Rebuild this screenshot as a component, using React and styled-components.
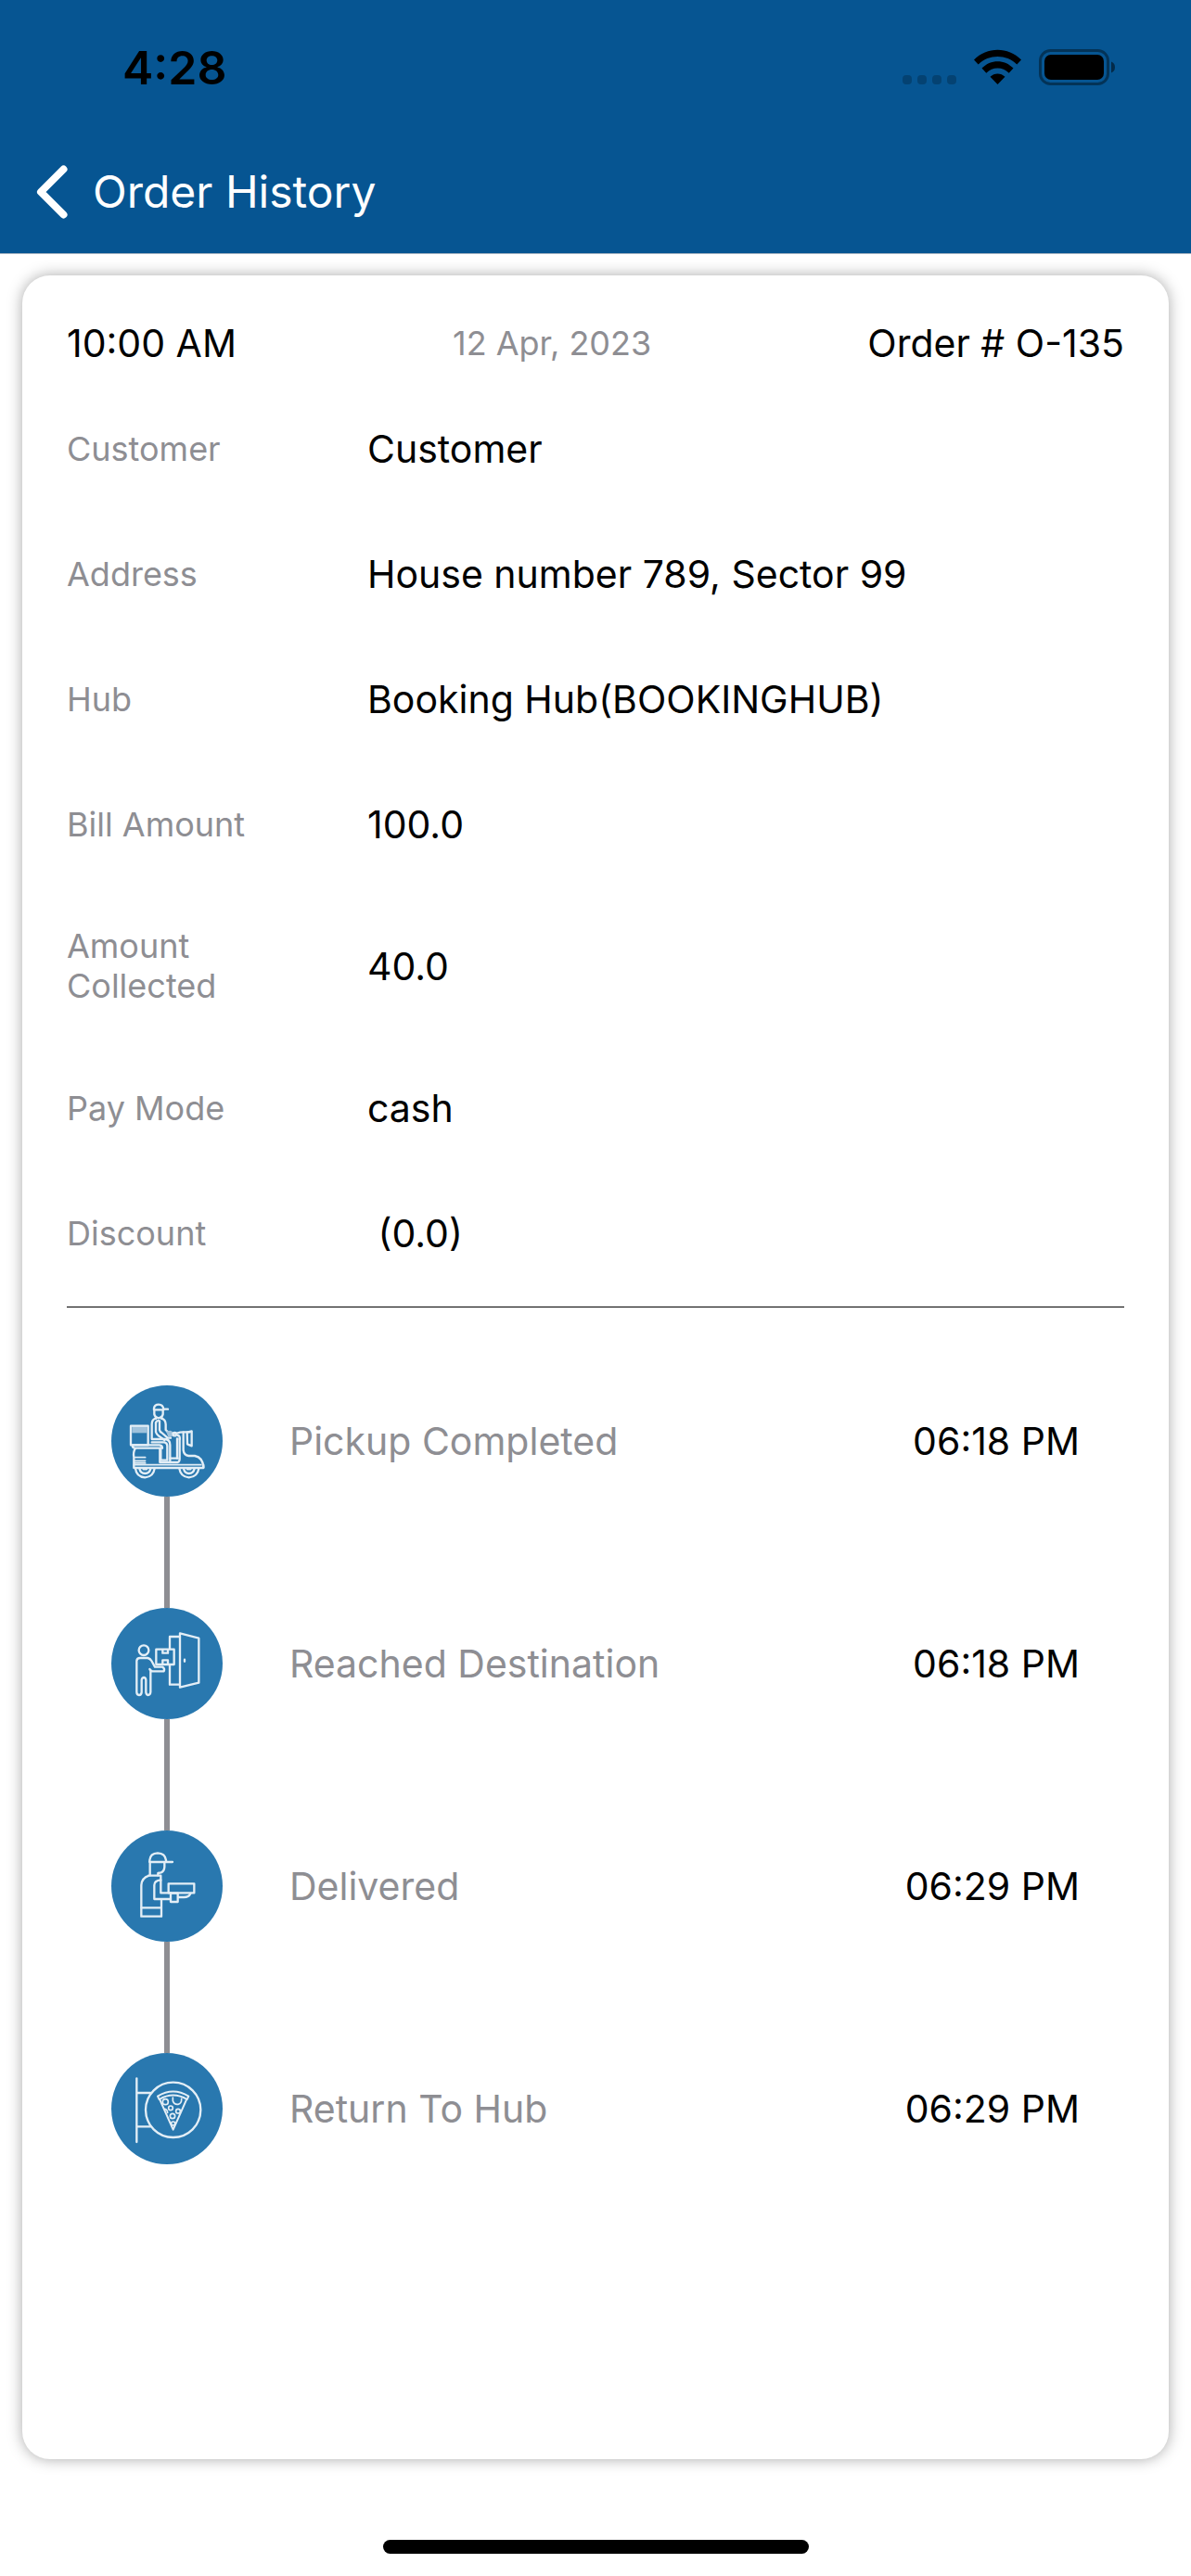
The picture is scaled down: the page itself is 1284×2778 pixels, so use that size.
import React from "react";
import styled, { createGlobalStyle } from "styled-components";

const colors = {
  brand: "#065592",
  badge: "#2978af",
  muted: "#8e8e93",
  ink: "#000000",
};

const GlobalStyle = createGlobalStyle`
  *, *::before, *::after { box-sizing: border-box; }
  body {
    margin: 0;
    background: #ffffff;
    color: ${colors.ink};
    font-family: Inter, "Liberation Sans", sans-serif;
  }
`;

const Screen = styled.div`
  display: flex;
  flex-direction: column;
  min-height: 100vh;
`;

const Header = styled.header`
  background: ${colors.brand};
  border-bottom: 1px solid #a5b4c2;
`;

const StatusBar = styled.div`
  display: flex;
  align-items: center;
  justify-content: space-between;
  height: 141px;
  padding: 4px 81px 0 132px;
`;

const Clock = styled.time`
  font-size: 50px;
  line-height: 60px;
  font-weight: 600;
`;

const StatusIcons = styled.div`
  display: flex;
  align-items: center;
  gap: 19px;

  svg {
    display: block;
  }
`;

const NavBar = styled.nav`
  display: flex;
  align-items: center;
  gap: 20px;
  height: 132px;
  padding: 0 32px;
`;

const BackButton = styled.button`
  display: flex;
  justify-content: center;
  width: 48px;
  padding: 0;
  border: 0;
  background: none;
  color: #ffffff;
  cursor: pointer;
`;

const Title = styled.h1`
  margin: 0;
  color: #ffffff;
  font-size: 48px;
  line-height: 60px;
  font-weight: 400;
`;

const Card = styled.main`
  flex: 1;
  margin: 23px 24px 24px;
  padding: 48px;
  border-radius: 30px;
  background: #ffffff;
  box-shadow: 0 0 16px rgba(0, 0, 0, 0.34);
`;

const Text = styled.span`
  color: ${(p) => (p.$muted ? colors.muted : colors.ink)};
  font-size: ${(p) => (p.$small ? 36 : 41)}px;
  line-height: ${(p) => (p.$small ? 43 : 50)}px;
  white-space: pre-wrap;
`;

const Summary = styled.div`
  display: flex;
  align-items: center;
  justify-content: space-between;
`;

const Details = styled.dl`
  display: flex;
  flex-direction: column;
  gap: 85px;
  margin: 0;
  padding: 64px 0 54px;
  border-bottom: 1px solid ${colors.ink};
`;

const DetailRow = styled.div`
  display: grid;
  grid-template-columns: 260px 1fr;
  column-gap: 64px;
  align-items: center;

  dd {
    margin: 0;
  }
`;

const Timeline = styled.ol`
  display: flex;
  flex-direction: column;
  gap: 120px;
  margin: 0;
  padding: 84px 48px 0;
  list-style: none;
`;

const Step = styled.li`
  display: grid;
  grid-template-columns: 120px 1fr auto;
  column-gap: 72px;
  align-items: center;
`;

const Badge = styled.span`
  position: relative;
  display: block;
  width: 120px;
  height: 120px;
  border-radius: 50%;
  background: ${colors.badge};

  svg {
    display: block;
  }

  ${Step}:not(:last-child) &::after {
    content: "";
    position: absolute;
    top: 100%;
    left: 57px;
    width: 6px;
    height: 120px;
    background: ${colors.muted};
  }
`;

const Footer = styled.footer`
  display: flex;
  justify-content: center;
  padding: 63px 0 24px;
`;

const HomeIndicator = styled.div`
  width: 459px;
  height: 15px;
  border-radius: 8px;
  background: ${colors.ink};
`;

function SignalDots() {
  return (
    <svg width="58" height="39" viewBox="0 0 58 39" fill="#000" fillOpacity="0.22" aria-hidden="true">
      {[0, 16, 32, 48].map((x) => (
        <rect key={x} x={x} y="28" width="10" height="10" rx="4" />
      ))}
    </svg>
  );
}

function WifiIcon() {
  return (
    <svg width="51" height="39" viewBox="0 0 51 39" aria-hidden="true">
      <path d="M0 11.5C14-2.8 37-2.8 51 11.5L46.300 16.500C35 5.200 16 5.200 4.700 16.500Z" />
      <path d="M8.500 20.500C18 10.700 33 10.700 42.500 20.500L37.700 25.700C31 18.700 20 18.700 13.300 25.700Z" />
      <path d="M17.500 29.800C22 25.300 29 25.300 33.500 29.800L25.500 38Z" />
    </svg>
  );
}

function BatteryIcon() {
  return (
    <svg width="83" height="39" viewBox="0 0 83 39" aria-hidden="true">
      <rect x="1.500" y="1.500" width="73" height="36" rx="11" fill="none" stroke="#000" strokeOpacity="0.4" strokeWidth="3" />
      <rect x="6" y="6" width="64" height="27" rx="7" />
      <path d="M78 13.500Q82 15 82 19.500T78 25.500Z" fillOpacity="0.5" />
    </svg>
  );
}

function ChevronLeft() {
  return (
    <svg width="34" height="58" viewBox="0 0 34 58" fill="none" stroke="currentColor" strokeWidth="8" strokeLinecap="round" strokeLinejoin="round" aria-hidden="true">
      <path d="M29.500 4.500L5 29L29.500 53.500" />
    </svg>
  );
}

function StepArt({ children }) {
  return (
    <svg width="120" height="120" viewBox="30 42 360 360" fill="none" stroke="#e3eef6" strokeWidth="7" strokeLinejoin="round" strokeLinecap="round" aria-hidden="true">
      {children}
    </svg>
  );
}

function ScooterArt() {
  return (
    <StepArt>
      {/* rider's cap and head */}
      <path d="M168 121V116Q170 104 183 104Q197 104 199 119H213" />
      <path d="M168 121H199M169 121V136Q171 146 183 148Q195 146 197 136V121" />
      <path d="M174 145V150M193 145V150" />
      {/* torso and arm */}
      <path d="M174 149Q161 152 161 168V216H204Q220 217 220 235V278H245" />
      <path d="M193 149Q205 152 206 168V186L213 193" />
      <path d="M174 163Q177 154 186 157V186Q187 192 193 195L212 212H222" />
      <path d="M174 163V193Q176 201 184 206L202 219" />
      <path d="M207 191L220 188Q230 190 230 200Q229 210 215 211Z" fill="#9fc2dc" stroke="none" />
      {/* delivery box */}
      <rect x="97" y="174" width="48" height="22" fill="#9fc2dc" stroke="none" />
      <path d="M93 173H149V235H93Z" />
      {/* seat and leg */}
      <path d="M98 235H186Q195 236 195 245H105Q98 244 98 235Z" />
      <path d="M161 226H202Q211 228 211 238V284H190V246" />
      <path d="M187 246V291H245Q251 289 251 280V214" />
      <path d="M220 278V291M243 278V214" />
      {/* handlebars and headlamp */}
      <path d="M230 197H243Q252 193 263 193H284" />
      <circle cx="235" cy="200" r="5" />
      <path d="M275 194L290 190V238L276 232Z" />
      <path d="M263 194V252Q265 268 280 270H300Q326 275 328 307" />
      <path d="M251 216Q253 205 245 204" />
      {/* chassis */}
      <path d="M107 247Q100 258 103 275V309H328V299" />
      <path d="M103 299H320M105 275H140M105 286H140M105 293H140" strokeWidth="5" />
      {/* wheels */}
      <path d="M108 311Q111 338 139 340Q166 338 170 311M121 311Q124 326 139 327Q154 326 157 311" />
      <path d="M250 311Q254 338 281 340Q309 338 313 311M264 311Q267 326 281 327Q296 326 299 311" />
      <path d="M134 313H144M276 313H286" />
    </StepArt>
  );
}

function DoorArt() {
  return (
    <StepArt>
      <circle cx="135" cy="179" r="16" />
      {/* courier */}
      <path d="M112 213Q113 204 123 204H148Q156 206 160 213L171 233H196Q204 238 200 247H163Q158 246 154 240L157 246V314Q156 324 149 324Q143 323 142 315V275Q141 267 135 267Q129 268 128 275V315Q127 324 120 324Q112 323 112 314Z" />
      {/* parcel */}
      <path d="M175 176H233V225H175ZM196 177V188H213V177M196 224V211H213V224" />
      {/* doorway and open door */}
      <path d="M219 174V135H250M219 226V290H250" />
      <path d="M252 124L313 140V284L252 299Z" />
      <path d="M267 209V215" />
    </StepArt>
  );
}

function CourierArt() {
  return (
    <StepArt>
      {/* cap and face */}
      <path d="M154 144V138Q156 116 180 115Q204 116 207 138V143" />
      <path d="M154 144H228M155 144V187M202 146V160Q201 174 191 178L181 180V187" />
      {/* torso */}
      <path d="M150 188H190V203M152 188Q128 196 127 219V320H192V268" />
      <path d="M128 292H191" />
      {/* arm */}
      <path d="M190 202Q169 204 169 219V264H222M190 204V244H222" />
      {/* tray and hand */}
      <path d="M215 214H298V244H215Z" />
      <path d="M222 245H245V273H222ZM246 258H265Q281 258 286 246" />
    </StepArt>
  );
}

function PizzaSignArt() {
  return (
    <StepArt>
      <path d="M112 124V330M115 171H157M115 280H157" />
      <circle cx="230" cy="226" r="89" />
      {/* slice */}
      <path d="M180 182Q230 151 280 182L275 192Q230 165 185 192Z" strokeWidth="6" />
      <path d="M187 193L230 290L273 193" strokeWidth="6" />
      <g strokeWidth="5">
        <path d="M229 186V197Q234 210 246 208Q258 205 257 190" />
        <circle cx="205" cy="200" r="9" />
        <circle cx="222" cy="220" r="7" />
        <circle cx="246" cy="230" r="7" />
        <circle cx="228" cy="246" r="8" />
        <circle cx="230" cy="270" r="6" />
        <path d="M201 223Q211 223 212 235" />
      </g>
    </StepArt>
  );
}

const details = [
  ["Customer", "Customer"],
  ["Address", "House number 789, Sector 99"],
  ["Hub", "Booking Hub(BOOKINGHUB)"],
  ["Bill Amount", "100.0"],
  ["Amount Collected", "40.0"],
  ["Pay Mode", "cash"],
  ["Discount", " (0.0)"],
];

const steps = [
  { label: "Pickup Completed", time: "06:18 PM", Art: ScooterArt },
  { label: "Reached Destination", time: "06:18 PM", Art: DoorArt },
  { label: "Delivered", time: "06:29 PM", Art: CourierArt },
  { label: "Return To Hub", time: "06:29 PM", Art: PizzaSignArt },
];

export default function App() {
  return (
    <Screen>
      <GlobalStyle />
      <Header>
        <StatusBar>
          <Clock>4:28</Clock>
          <StatusIcons>
            <SignalDots />
            <WifiIcon />
            <BatteryIcon />
          </StatusIcons>
        </StatusBar>
        <NavBar>
          <BackButton type="button" aria-label="Back">
            <ChevronLeft />
          </BackButton>
          <Title>Order History</Title>
        </NavBar>
      </Header>

      <Card>
        <Summary>
          <Text as="time">10:00 AM</Text>
          <Text as="time" $muted $small>12 Apr, 2023</Text>
          <Text>Order # O-135</Text>
        </Summary>

        <Details>
          {details.map(([label, value]) => (
            <DetailRow key={label}>
              <Text as="dt" $muted $small>{label}</Text>
              <Text as="dd">{value}</Text>
            </DetailRow>
          ))}
        </Details>

        <Timeline>
          {steps.map(({ label, time, Art }) => (
            <Step key={label}>
              <Badge>
                <Art />
              </Badge>
              <Text $muted>{label}</Text>
              <Text as="time">{time}</Text>
            </Step>
          ))}
        </Timeline>
      </Card>

      <Footer>
        <HomeIndicator />
      </Footer>
    </Screen>
  );
}
